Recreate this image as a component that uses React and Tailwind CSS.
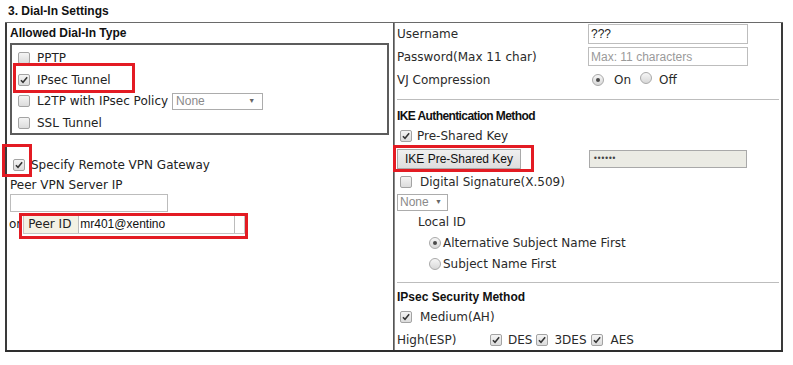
import React from 'react';

const body = { fontFamily: '"DejaVu Sans", Verdana, sans-serif' };
const arial = { fontFamily: '"Liberation Sans", Arial, sans-serif' };

const Check = ({ checked }) => (
  <span className="inline-flex w-[12px] h-[12px] shrink-0 items-center justify-center rounded-[2px] border border-[#a3a3a3] bg-gradient-to-b from-[#f4f4f4] to-[#dcdcdc]">
    {checked && (
      <svg viewBox="0 0 12 12" className="w-[10px] h-[10px]">
        <path d="M2.3 6.2 L4.8 8.8 L9.8 2.6" fill="none" stroke="#333" strokeWidth="1.8" />
      </svg>
    )}
  </span>
);

const Radio = ({ checked }) => (
  <span className="inline-flex w-[12px] h-[12px] shrink-0 items-center justify-center rounded-full border border-[#a9a9a9] bg-gradient-to-b from-[#f6f6f6] to-[#d8d8d8]">
    {checked && <span className="w-[4px] h-[4px] rounded-full bg-[#4a4a4a]" />}
  </span>
);

const RedBox = ({ className }) => (
  <div className={`absolute border-[3px] border-[#e31b23] pointer-events-none ${className}`} />
);

export default function App() {
  return (
    <div className="relative w-[793px] h-[365px] bg-white text-[12px] text-[#222]" style={body}>
      {/* Title */}
      <div className="h-[22px] pl-[8px] flex items-center font-bold text-[12px] text-[#111]" style={arial}>
        3. Dial-In Settings
      </div>

      {/* Table */}
      <div className="ml-[5px] w-[778px] flex border-t border-[#6a6a6a] border-b-2 border-b-[#2e2e2e] h-[330px]">
        {/* Left cell */}
        <div className="w-[389px] border-l-2 border-l-[#3a3a3a] border-r border-r-[#555]">
          <div className="h-[20px] pl-[3px] flex items-center font-bold text-[#111]" style={arial}>
            Allowed Dial-In Type
          </div>
          <div className="ml-[3px] w-[379px] h-[92px] border-2 border-[#5c5c5c] pt-[2px] pl-[6px]">
            <div className="h-[22px] flex items-center gap-[7px]"><Check /><span>PPTP</span></div>
            <div className="h-[21px] flex items-center gap-[7px]"><Check checked /><span>IPsec Tunnel</span></div>
            <div className="h-[22px] flex items-center gap-[7px]">
              <Check /><span>L2TP with IPsec Policy</span>
              <span className="ml-[-3px] w-[91px] h-[17px] border border-[#acacac] flex items-center justify-between px-[3px] text-[#8a8a8a]" style={arial}>
                None<span className="text-[7px] text-[#666] pr-[4px]">▼</span>
              </span>
            </div>
            <div className="h-[21px] flex items-center gap-[7px]"><Check /><span>SSL Tunnel</span></div>
          </div>

          <div className="h-[19px]" />
          <div className="h-[22px] pl-[6px] flex items-center gap-[6px] text-[#222]">
            <Check checked /><span>Specify Remote VPN Gateway</span>
          </div>
          <div className="h-[18px] pl-[3px] flex items-center">Peer VPN Server IP</div>
          <div className="pl-[3px]">
            <div className="w-[158px] h-[18px] border border-[#bcbcbc]" />
          </div>
          <div className="h-[24px] pl-[2px] flex items-center">
            <span>or</span>
            <div className="ml-[2px] flex h-[20px] border border-[#c4c4c4] bg-white">
              <span className="w-[54px] bg-[#f3f1e4] flex items-center pl-[4px]">Peer ID</span>
              <span className="w-[157px] border-l border-r border-[#bcbcbc] flex items-center pl-[1px] text-[#111]" style={arial}>
                mr401@xentino
              </span>
              <span className="w-[9px]" />
            </div>
          </div>
        </div>

        {/* Right cell */}
        <div className="flex-1 border-l border-l-[#8a8a8a] border-r-2 border-r-[#3a3a3a] text-[#2a2a2a]">
          <div className="h-[22px] flex items-center pl-[2px]">
            <span className="w-[191px]">Username</span>
            <span className="w-[160px] h-[20px] border border-[#bdbdbd] flex items-center pl-[2px] text-[#222]" style={arial}>???</span>
          </div>
          <div className="h-[23px] flex items-center pl-[2px]">
            <span className="w-[191px]">Password(Max 11 char)</span>
            <span className="w-[160px] h-[19px] border border-[#bdbdbd] flex items-center pl-[2px] text-[#9a9a9a]" style={arial}>Max: 11 characters</span>
          </div>
          <div className="h-[23px] flex items-center pl-[2px]">
            <span className="w-[195px]">VJ Compression</span>
            <Radio checked /><span className="ml-[10px]">On</span>
            <span className="ml-[9px]"><Radio /></span><span className="ml-[7px]">Off</span>
          </div>
          <div className="h-[8px]" />
          <div className="mx-[2px] border-t border-[#bdbdbd]" />

          <div className="h-[5px]" />
          <div className="h-[22px] flex items-center pl-[2px] font-bold text-[#111] tracking-[-0.6px]" style={arial}>
            IKE Authentication Method
          </div>
          <div className="h-[18px] flex items-center pl-[5px] gap-[5px]"><Check checked /><span>Pre-Shared Key</span></div>
          <div className="h-[27px] flex items-center pl-[2px]">
            <span className="w-[124px] h-[20px] border border-[#a9a9a9] bg-gradient-to-b from-[#f0f0f0] to-[#dedede] flex items-center justify-center text-[#111]" style={arial}>
              IKE Pre-Shared Key
            </span>
            <span className="ml-[68px] w-[158px] h-[18px] border border-[#a9a9a9] bg-[#ebebe4] flex items-center pl-[3px] text-[8px] tracking-[-1px] text-[#444]">
              ••••••
            </span>
          </div>
          <div className="h-[20px] flex items-center pl-[5px] gap-[8px]"><Check /><span>Digital Signature(X.509)</span></div>
          <div className="h-[20px] flex items-center pl-[2px]">
            <span className="w-[51px] h-[17px] border border-[#acacac] flex items-center justify-between px-[2px] text-[#8a8a8a]" style={arial}>
              None<span className="text-[7px] text-[#666] pr-[3px]">▼</span>
            </span>
          </div>
          <div className="h-[19px] flex items-center pl-[23px]">Local ID</div>
          <div className="h-[23px] flex items-center pl-[34px] gap-[2px]"><Radio checked /><span>Alternative Subject Name First</span></div>
          <div className="h-[20px] flex items-center pl-[34px] gap-[2px]"><Radio /><span>Subject Name First</span></div>
          <div className="h-[8px]" />
          <div className="mx-[2px] border-t border-[#bdbdbd]" />

          <div className="h-[4px]" />
          <div className="h-[20px] flex items-center pl-[2px] font-bold text-[#111]" style={arial}>
            IPsec Security Method
          </div>
          <div className="h-[19px] flex items-center pl-[5px] gap-[8px]"><Check checked /><span>Medium(AH)</span></div>
          <div className="h-[2px]" />
          <div className="h-[24px] flex items-center pl-[2px]">
            <span className="w-[93px]">High(ESP)</span>
            <Check checked /><span className="ml-[6px] mr-[4px]">DES</span>
            <Check checked /><span className="ml-[6px] mr-[4px]">3DES</span>
            <Check checked /><span className="ml-[8px]">AES</span>
          </div>
        </div>
      </div>

      {/* Red annotation boxes */}
      <RedBox className="left-[13px] top-[63px] w-[122px] h-[30px]" />
      <RedBox className="left-[2px] top-[144px] w-[30px] h-[33px]" />
      <RedBox className="left-[19px] top-[213px] w-[229px] h-[26px]" />
      <RedBox className="left-[393px] top-[145px] w-[141px] h-[27px]" />
    </div>
  );
}
